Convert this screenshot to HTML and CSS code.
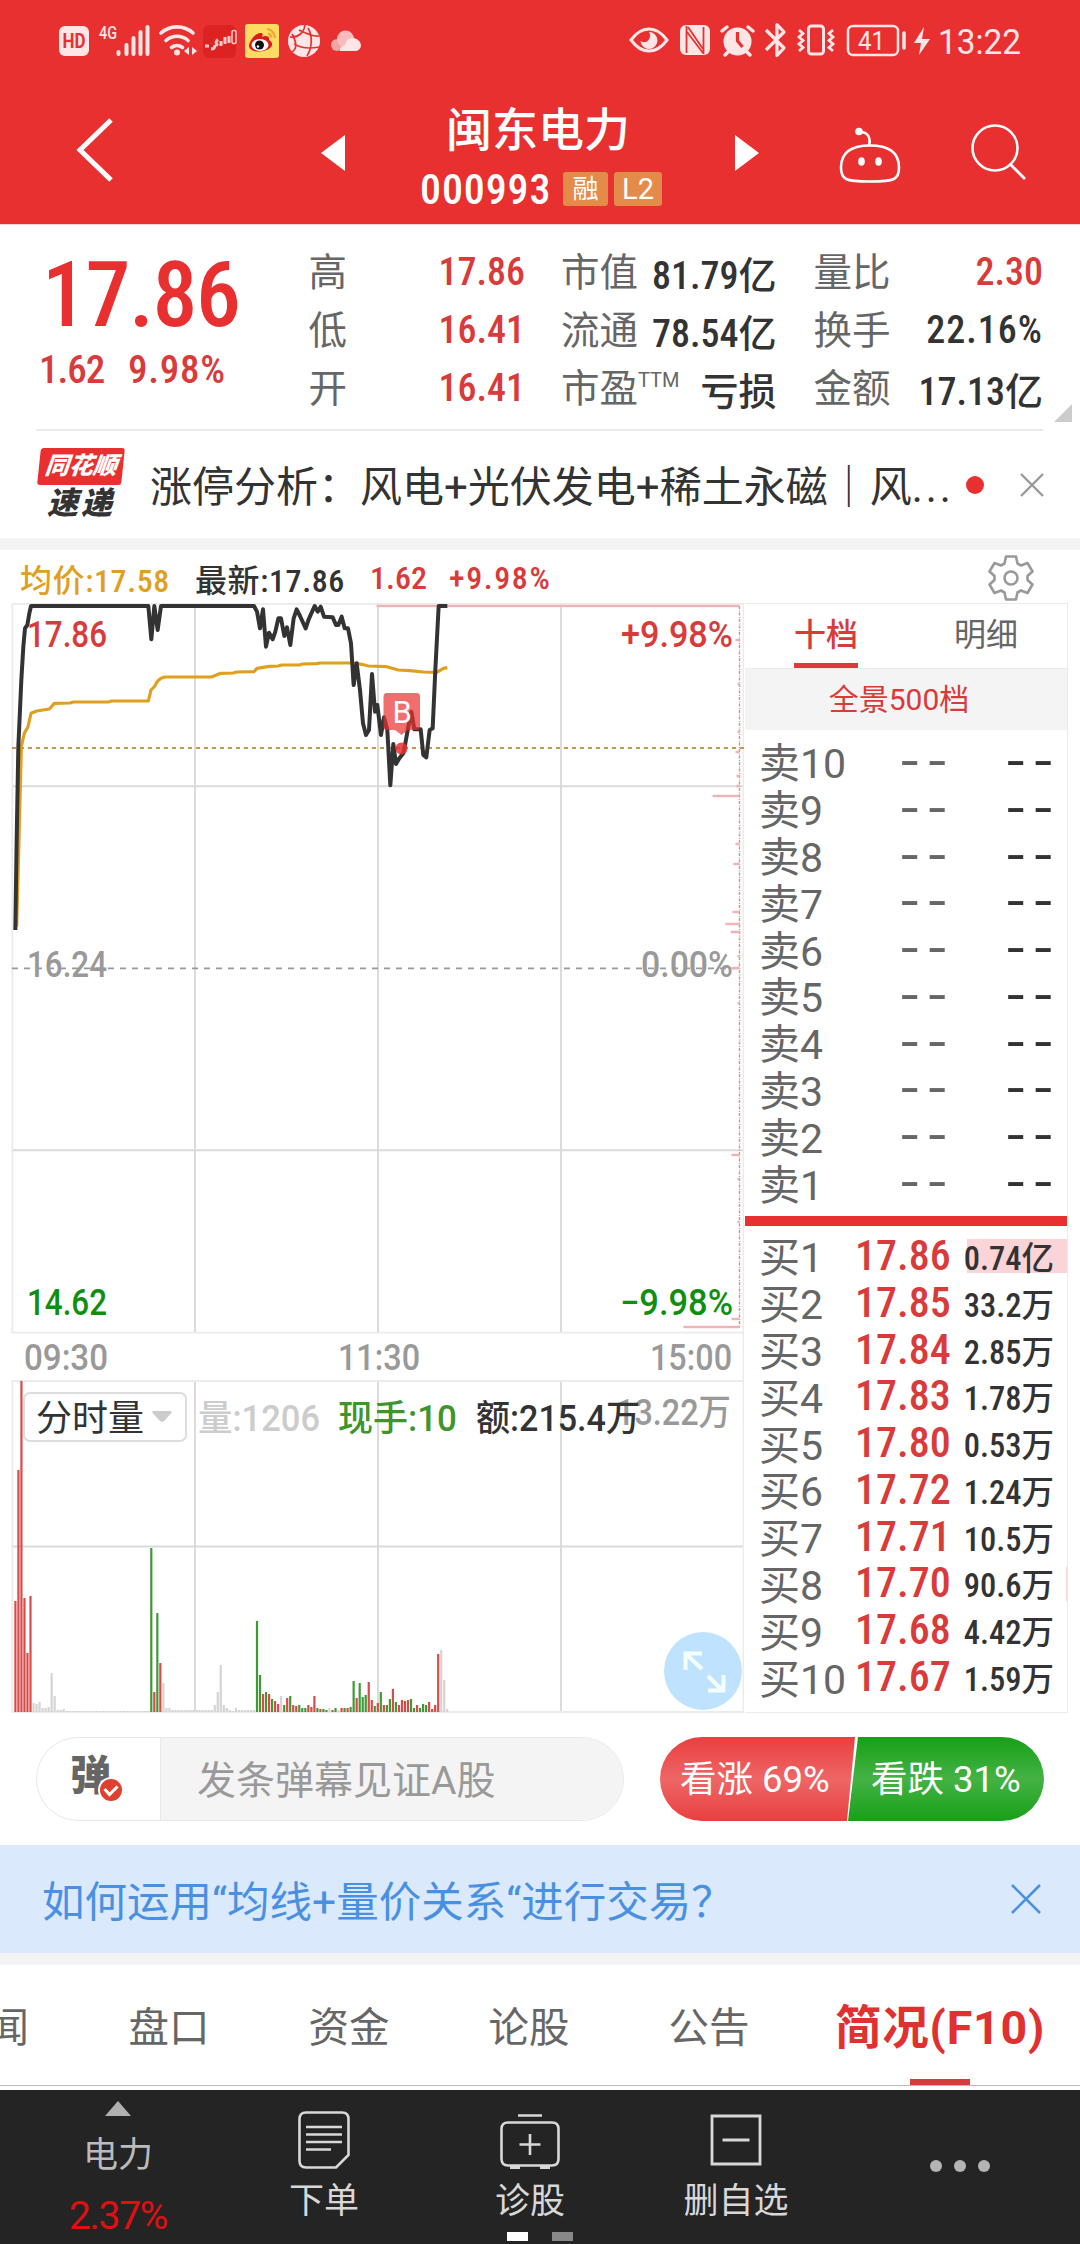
FILE: index.html
```html
<!DOCTYPE html>
<html lang="zh-CN">
<head>
    <meta charset="UTF-8">
    <title>闽东电力 000993</title>
    <link rel="stylesheet" href="styles.css">
</head>
<body>
    <header class="header">
        <div class="status-bar">
            <svg class="status-left" viewBox="59 20 304 40" width="304" height="40">
                <rect x="59" y="26" width="30" height="30" rx="6" fill="#ffe6e6"/>
                <text x="62.5" y="48" font-size="20" font-weight="700" fill="#e93030" textLength="23" lengthAdjust="spacingAndGlyphs">HD</text>
                <text x="99" y="39" font-size="19" font-weight="500" fill="#ffe6e6" textLength="18" lengthAdjust="spacingAndGlyphs">4G</text>
                <path d="M118.500 52v2M126.500 45v9M133.500 38v16M140.500 32v22M147.500 27v27" stroke="#ffe6e6" stroke-width="4" stroke-linecap="round"/>
                <g fill="none" stroke="#ffe6e6" stroke-width="3.600" stroke-linecap="round">
                    <path d="M161 33a24 24 0 0 1 32 0M166 40.500a16.500 16.500 0 0 1 22 0M171.500 47.500a9 9 0 0 1 11 0"/>
                </g>
                <circle cx="177" cy="52.500" r="3" fill="#ffe6e6"/>
                <path d="M189 47v8l-5-4zM192 47v8l5-4z" fill="#ffe6e6"/>
                <rect x="203" y="25" width="33" height="33" rx="6" fill="#dd2222"/>
                <path d="M205 46h4M211 49q4 0 4-4M218 39.500q-4 3 0 6M221 41v5M225 37v7M229 36v7" fill="none" stroke="#ffc9c9" stroke-width="3"/>
                <rect x="232" y="30.500" width="4" height="13" rx="1.500" fill="none" stroke="#ffc9c9" stroke-width="1.500"/>
                <rect x="245" y="24" width="34" height="34" rx="3" fill="#fedb62"/>
                <path d="M249 46c0-6 8-14 12-13 2 0 2 2 1 4 4-2 8-1 7 3 4 2 4 6 1 8-5 5-21 5-21-2z" fill="#dc1c1c"/>
                <ellipse cx="260" cy="45" rx="8.500" ry="6" fill="#fff"/>
                <circle cx="259.500" cy="45" r="4.500" fill="#111"/>
                <circle cx="258" cy="46.500" r="1.200" fill="#fff"/>
                <path d="M267 29a9 9 0 0 1 8 9M268 33.500a5 5 0 0 1 3.500 4" fill="none" stroke="#eda62c" stroke-width="2"/>
                <circle cx="304" cy="41" r="16" fill="#ffe6e6"/>
                <path d="M290 37c9 1 14-5 15-12M292 34c5 9 5 15 0 18M308 28c5 8 4 20-1 28M294 44q10 6 25 3M299 30c8 4 15 7 20 6" fill="none" stroke="#e93030" stroke-width="1.700"/>
                <circle cx="337" cy="45" r="6" fill="#f5a3a3"/>
                <circle cx="345.500" cy="39" r="8.500" fill="#f9bcbc"/>
                <path d="M340 51q-1-4 5-6 2-8 9-7 7 2 7 8-1 5-6 5z" fill="#ffe6e6"/>
            </svg>
            <svg class="status-right" viewBox="628 20 400 40" width="400" height="40">
                <path d="M631 40q8-11 18-11t18 11q-8 11-18 11t-18-11z" fill="none" stroke="#ffe6e6" stroke-width="3"/>
                <path d="M649 32a8.500 8.500 0 1 1-8.500 9q5 3 8-1t.5-8z" fill="#ffe6e6"/>
                <rect x="680" y="25" width="30" height="30" rx="6" fill="#ffe6e6"/>
                <path d="M686.500 26v27M703.500 54V27M688 27l15 22M687 32l16 21" stroke="#e93030" stroke-width="1.800"/>
                <circle cx="737.500" cy="41.500" r="14" fill="#ffe6e6"/>
                <path d="M722 31l5-4M753 31l-5-4M729 51l-4 4M746 51l4 4" stroke="#ffe6e6" stroke-width="3.500" stroke-linecap="round"/>
                <path d="M737.500 32v9l5 6" fill="none" stroke="#e93030" stroke-width="3.200"/>
                <path d="M766 30l18 18-7 7.500V24.500l7 7.500-18 18" fill="none" stroke="#ffe6e6" stroke-width="3.200" stroke-linejoin="round"/>
                <rect x="808.500" y="26" width="15" height="28" rx="3" fill="none" stroke="#ffe6e6" stroke-width="3"/>
                <path d="M799 30l4 3.500-4 3.500 4 3.500-4 3.500 4 3.500-4 3.500M833 30l-4 3.500 4 3.500-4 3.500 4 3.500-4 3.500 4 3.500" fill="none" stroke="#ffe6e6" stroke-width="2.800"/>
                <rect x="848" y="26" width="50" height="29" rx="5" fill="none" stroke="#ffe6e6" stroke-width="2.500"/>
                <path d="M904 33v15" stroke="#ffe6e6" stroke-width="3.500" stroke-linecap="round"/>
                <text x="858" y="49.500" font-size="26" fill="#ffe6e6" textLength="27" lengthAdjust="spacingAndGlyphs">41</text>
                <path d="M924 27l-10 16h7l-2 12 11-16h-8z" fill="#ffe6e6"/>
                <text x="938" y="54" font-size="35" fill="#ffe6e6" textLength="83" lengthAdjust="spacingAndGlyphs">13:22</text>
            </svg>
        </div>
        <div class="nav-bar">
            <svg class="nav-back" viewBox="0 0 38 66" width="38" height="66"><path d="M35 3L4 33l31 30" fill="none" stroke="#fff" stroke-width="5"/></svg>
            <svg class="nav-prev" viewBox="0 0 24 36" width="24" height="36"><path d="M24 0v36L0 18z" fill="#fff"/></svg>
            <div class="nav-title">
                <h1 class="stock-name">闽东电力</h1>
                <div class="stock-code">
                    <span class="num code">000993</span>
                    <span class="tag">融</span>
                    <span class="tag tag-l2">L2</span>
                </div>
            </div>
            <svg class="nav-next" viewBox="0 0 24 36" width="24" height="36"><path d="M0 0v36l24-18z" fill="#fff"/></svg>
            <svg class="nav-robot" viewBox="0 0 62 58" width="62" height="58">
                <path d="M31 19.500c18 0 29 6 29 22 0 12-4 14-29 14s-29-2-29-14c0-16 11-22 29-22z" fill="none" stroke="#fff" stroke-width="2.600"/>
                <path d="M30 19c2-7-1-13-9-13" fill="none" stroke="#fff" stroke-width="2.600"/>
                <circle cx="20" cy="5.500" r="3.800" fill="#fff"/>
                <ellipse cx="22.500" cy="35.500" rx="3.300" ry="4.300" fill="#fff"/>
                <ellipse cx="39.500" cy="35.500" rx="3.300" ry="4.300" fill="#fff"/>
            </svg>
            <svg class="nav-search" viewBox="0 0 56 56" width="56" height="56">
                <circle cx="25" cy="24" r="22.500" fill="none" stroke="#fff" stroke-width="2.600"/>
                <path d="M40 40l15 15" stroke="#fff" stroke-width="2.800"/>
            </svg>
        </div>
    </header>

    <section class="quote">
        <div class="quote-main">
            <div class="num quote-price">17.86</div>
            <div class="quote-change"><span class="num change">1.62</span><span class="num change-rate">9.98%</span></div>
        </div>
        <dl class="stats stats-a">
            <div><dt>高</dt><dd class="num red">17.86</dd></div>
            <div><dt>低</dt><dd class="num red">16.41</dd></div>
            <div><dt>开</dt><dd class="num red">16.41</dd></div>
        </dl>
        <dl class="stats stats-b">
            <div><dt>市值</dt><dd class="num">81.79亿</dd></div>
            <div><dt>流通</dt><dd class="num">78.54亿</dd></div>
            <div><dt>市盈<sup>TTM</sup></dt><dd class="num">亏损</dd></div>
        </dl>
        <dl class="stats stats-c">
            <div><dt>量比</dt><dd class="num red">2.30</dd></div>
            <div><dt>换手</dt><dd class="num turnover">22.16%</dd></div>
            <div><dt>金额</dt><dd class="num">17.13亿</dd></div>
        </dl>
        <i class="quote-more"></i>
    </section>

    <section class="news">
        <div class="news-logo">
            <span class="news-logo-top">同花顺</span>
            <span class="news-logo-bottom">速递</span>
        </div>
        <p class="news-text">涨停分析：风电+光伏发电+稀土永磁｜风<span class="dots">...</span></p>
        <i class="news-dot"></i>
        <svg viewBox="0 0 24 24" width="24" height="24"><path d="M1 1l22 22M23 1L1 23" stroke="#999" stroke-width="2.400"/></svg>
    </section>

    <section class="chart-panel">
        <div class="chart-info">
            <span class="num avg">均价:17.58</span>
            <span class="num latest">最新:17.86</span>
            <span class="num diff">1.62</span>
            <span class="num rate">+9.98%</span>
            <svg class="gear" viewBox="-24 -24 48 48" width="48" height="48">
                <path d="M-5-21.500H5L6.500-14.500 10-12.500 16.500-15 21.500-6.500 16.500-2V2l5 4.500L16.500 15 10 12.500 6.500 14.500 5 21.500H-5L-6.500 14.500-10 12.500-16.500 15-21.500 6.500-16.500 2V-2l-5-4.500L-16.500-15-10-12.500-6.500-14.500z" fill="none" stroke="#999" stroke-width="2.600" stroke-linejoin="round"/>
                <circle r="6.500" fill="none" stroke="#999" stroke-width="2.600"/>
            </svg>
        </div>
        <div class="chart-body">
            <svg class="chart" viewBox="0 603 744 1110" width="744" height="1110">
                <!-- 网格 -->
                <g fill="none" stroke="#dadada" stroke-width="1.900">
                    <path d="M12 786.300H744M12 1150.300H744M195 604V1333M378 604V1333M561 604V1333"/>
                    <path d="M12 1546.500H744M195 1381V1712M378 1381V1712M561 1381V1712"/>
                </g>
                <g fill="none" stroke="#ebebeb" stroke-width="1.800">
                    <path d="M12.300 603.900H743.500V1712H12.300V1381H743.500M12.300 604V1332.700H743.500"/>
                </g>
                <path d="M12 968.300H739" stroke="#999" stroke-width="1.800" stroke-dasharray="6 6"/>
                <path d="M12 748H744" stroke="#c89550" stroke-width="2.200" stroke-dasharray="4 4"/>
                <!-- 筹码分布 -->
                <path d="M739.500 606V1328" stroke="#d68e94" stroke-width="1.400" stroke-dasharray="3 1.500 1 1"/>
                <g id="chips"></g>
                <!-- 均价线 / 分时线 -->
                <g transform="translate(0 540) scale(.33333)" fill="none" stroke-linejoin="round">
                    <polyline stroke="#dfa01f" stroke-width="9.500" points="50,1160 57,900 64,620 73,580 84,560 93,520 110,513 148,507 163,490 210,489 220,486 325,486 335,483 445,483 453,450 463,440 473,423 483,415 495,411 635,411 662,400 700,399 710,396 762,395 771,385 808,379 835,378 845,375 898,375 908,372 950,371 960,369 1060,369 1085,373 1105,378 1160,380 1195,390 1230,392 1270,396 1310,397 1330,385 1342,383"/>
                    <polyline stroke="#333" stroke-width="12" points="46,1170 50,900 55,620 64,420 70,320 75,265 82,255 88,220 93,198 445,198 454,298 463,198 473,270 483,198 762,198 771,215 780,265 789,208 798,320 807,278 818,298 826,275 835,235 843,235 853,288 861,262 871,315 881,235 890,208 900,228 917,265 926,238 944,198 953,215 962,200 972,230 998,232 1008,255 1015,255 1025,230 1034,265 1044,265 1053,310 1061,435 1070,370 1080,450 1089,550 1098,585 1107,570 1116,402 1125,515 1132,495 1143,585 1152,532 1162,570 1171,736 1180,612 1188,672 1198,655 1210,640 1216,610 1225,560 1234,515 1243,568 1262,568 1270,645 1279,652 1289,570 1298,565 1306,390 1316,198 1342,198"/>
                </g>
                <!-- 买入标记 -->
                <path d="M387 693h29.500q3.500 0 3.500 3.500v30q0 3.500-3.500 3.500H408l-6.500 5-6.500-5h-8q-3.500 0-3.500-3.500v-30q0-3.500 3.500-3.500z" fill="#e93030" fill-opacity=".7"/>
                <text x="392.500" y="722.500" font-size="31" fill="#fff">B</text>
                <circle cx="401.500" cy="748.500" r="6" fill="#e93030" fill-opacity=".85"/>
                <g class="axis">
                    <text x="27" y="647" class="up" textLength="80" lengthAdjust="spacingAndGlyphs">17.86</text>
                    <text x="621" y="647" class="up" textLength="112" lengthAdjust="spacingAndGlyphs">+9.98%</text>
                    <text x="27" y="977" class="flat" textLength="80" lengthAdjust="spacingAndGlyphs">16.24</text>
                    <text x="641" y="977" class="flat" textLength="92" lengthAdjust="spacingAndGlyphs">0.00%</text>
                    <text x="27" y="1315" class="down" textLength="80" lengthAdjust="spacingAndGlyphs">14.62</text>
                    <text x="620" y="1315" class="down" textLength="113" lengthAdjust="spacingAndGlyphs">−9.98%</text>
                    <text x="24" y="1370" class="flat" textLength="84" lengthAdjust="spacingAndGlyphs">09:30</text>
                    <text x="338" y="1370" class="flat" textLength="82" lengthAdjust="spacingAndGlyphs">11:30</text>
                    <text x="650" y="1370" class="flat" textLength="82" lengthAdjust="spacingAndGlyphs">15:00</text>
                </g>
                <!-- 成交量 -->
                <g id="volume"></g>
                <rect x="24" y="1393" width="162" height="48" rx="6" fill="#fff" stroke="#ddd" stroke-width="2"/>
                <text x="36" y="1431" font-size="36" fill="#333">分时量</text>
                <path d="M154 1411h16q3 0 1 2.500l-7 7.500q-2 1.500-4 0l-7-7.500q-2-2.500 1-2.500z" fill="#ccc"/>
                <g class="axis">
                    <text x="616" y="1425" class="flat" textLength="115" lengthAdjust="spacingAndGlyphs">13.22万</text>
                    <text x="198" y="1431" fill="#ccc" textLength="122" lengthAdjust="spacingAndGlyphs">量:1206</text>
                    <text x="338" y="1431" fill="#3d952b" textLength="119" lengthAdjust="spacingAndGlyphs">现手:10</text>
                    <text x="476" y="1431" fill="#333" textLength="164" lengthAdjust="spacingAndGlyphs">额:215.4万</text>
                </g>
                <circle cx="703" cy="1671" r="39" fill="#bfe3ff"/>
                <path d="M702 1669l-16-15M685.500 1670v-16.500H702M708 1676l14 14M708 1690.500h15.500V1675" fill="none" stroke="#f4fffc" stroke-width="4"/>
            </svg>
            <div class="book">
                <div class="book-tabs">
                    <span class="active">十档</span>
                    <span>明细</span>
                </div>
                <div class="book-all">全景500档</div>
                <div class="book-list sell" id="sellList"></div>
                <div class="book-split"></div>
                <div class="book-list buy" id="buyList"></div>
            </div>
        </div>
    </section>

    <section class="danmu">
        <div class="danmu-input">
            <div class="danmu-switch">弹
                <svg class="danmu-check" viewBox="0 0 26 26" width="26" height="26">
                    <circle cx="13" cy="13" r="12" fill="#e0402e" stroke="#fff" stroke-width="2"/>
                    <path d="M6.500 12l5 5.500 8-8" fill="none" stroke="#fff" stroke-width="3"/>
                </svg>
            </div>
            <div class="danmu-text">发条弹幕见证A股</div>
        </div>
        <div class="vote">
            <div class="vote-up">看涨 69%</div>
            <div class="vote-down">看跌 31%</div>
        </div>
    </section>

    <section class="tip">
        <span>如何运用“均线+量价关系“进行交易？</span>
        <svg viewBox="0 0 30 30" width="30" height="30"><path d="M1 1l28 28M29 1L1 29" stroke="#4a90e2" stroke-width="2.600"/></svg>
    </section>

    <nav class="tabs">
        <span>新闻</span>
        <span>盘口</span>
        <span>资金</span>
        <span>论股</span>
        <span>公告</span>
        <span class="active">简况(F10)</span>
    </nav>

    <footer class="bottom">
        <div class="bottom-item sector">
            <svg viewBox="0 0 26 15" width="26" height="15"><path d="M13 0l13 15H0z" fill="#b0b0b0"/></svg>
            <span>电力</span>
            <b>2.37%</b>
        </div>
        <div class="bottom-item">
            <svg viewBox="0 0 52 58" width="52" height="58" fill="none" stroke="#d8d8d8" stroke-width="2.600">
                <path d="M8 1.500h36q6.500 0 6.500 6.500v36L38 56.500H8Q1.500 56.500 1.500 50V8Q1.500 1.500 8 1.500z"/>
                <path d="M8 16h36M8 23.500h36M8 31h36M8 38.500h25"/>
            </svg>
            <span>下单</span>
        </div>
        <div class="bottom-item">
            <svg viewBox="0 0 60 58" width="60" height="58" fill="none" stroke="#d8d8d8" stroke-width="2.600">
                <path d="M8 11.500h44q6.500 0 6.500 6.500v30q0 6.500-6.500 6.500H8Q1.500 54.500 1.500 48V18q0-6.500 6.500-6.500zM18 4.500h24M30 23v21M19.500 33.500h21"/>
                <path d="M10 56h10M40 56h10" stroke-width="4"/>
            </svg>
            <span>诊股</span>
        </div>
        <div class="bottom-item">
            <svg viewBox="0 0 52 58" width="52" height="58" fill="none" stroke="#d8d8d8" stroke-width="2.800">
                <path d="M2 5h48v48H2zM12.500 29h27"/>
            </svg>
            <span>删自选</span>
        </div>
        <div class="bottom-item more">
            <i></i><i></i><i></i>
        </div>
        <div class="pager"><i class="on"></i><i></i></div>
    </footer>

    <script>
        const SVG_NS = 'http://www.w3.org/2000/svg';

        function addRect(parent, x, y, width, height, fill) {
            const rect = document.createElementNS(SVG_NS, 'rect');
            rect.setAttribute('x', x);
            rect.setAttribute('y', y);
            rect.setAttribute('width', width);
            rect.setAttribute('height', height);
            rect.setAttribute('fill', fill);
            parent.appendChild(rect);
        }

        // 每分钟成交量：高度 + 颜色 (r 涨 / g 跌 / n 平)
        const volumes = ('111r 242r 331r 114r 59r 116r 9n 8n 10n 4n 4n 5n 39n 16n 2n 2n 3n ' + '1n '.repeat(28) +
            '164g 20r 99g 49r 29n 4n 4n ' + '2n '.repeat(14) + '7n 20n 47n 7n 4n 2n 1n 4n ' + '2n '.repeat(6) +
            '91g 37g 18r 20g 18r 13g 11r 8r 16n 7g 14r 16g 7r 6r 7g 4g 4g 7r 5r 16r 4g 3r 3g 2g 4n 2r 4g 2n 4r 4g 4r 5g ' +
            '31g 14r 29g 15g 17g 30r 12r 6g 9r 20g 7r 7g 13g 23r 10g 7r 12r 11r 12r 13g 4g 7r 4g 8g 7g 10r 3r 7r 58r 62n 32n 3n').split(/\s+/);
        const volumeColors = { r: '#d94a4a', g: '#3f9a36', n: '#d4d4d4' };
        const volume = document.getElementById('volume');
        volumes.forEach((item, i) => {
            const h = parseInt(item);
            addRect(volume, 14.3 + i * 3.02, 1712 - h, 2.2, h, volumeColors[item.slice(-1)]);
        });

        // [y, 长度]
        const chips = document.getElementById('chips');
        [[606, 363], [640, 4], [684, 2], [732, 2], [752, 4], [776, 3], [786, 3], [796, 27], [844, 4], [864, 6], [912, 7],
         [924, 14], [932, 9], [956, 2], [968, 8], [1003, 2], [1155, 8], [1179, 2], [1222, 2], [1319, 8], [1327, 56]]
            .forEach(([y, w]) => addRect(chips, 739.5 - w, y - 1.2, w, 2.4, '#f0b2b5'));

        function addRow(list, name, price, amount, percent) {
            const row = document.createElement('div');
            row.className = 'book-row';
            row.innerHTML = `<span class="name">${name}</span><span class="price num">${price}</span><span class="amount num">${amount}</span>`;
            if (percent) {
                const bar = document.createElement('i');
                bar.className = 'book-bar';
                bar.style.width = percent + '%';
                row.prepend(bar);
            }
            list.appendChild(row);
        }

        const sellList = document.getElementById('sellList');
        for (let i = 10; i > 0; i--) {
            addRow(sellList, '卖' + i, '--', '--');
        }

        const buyList = document.getElementById('buyList');
        [['17.86', '0.74亿', 31], ['17.85', '33.2万'], ['17.84', '2.85万'], ['17.83', '1.78万'], ['17.80', '0.53万'],
         ['17.72', '1.24万'], ['17.71', '10.5万'], ['17.70', '90.6万', 0.4], ['17.68', '4.42万'], ['17.67', '1.59万']]
            .forEach(([price, amount, percent], i) => addRow(buyList, '买' + (i + 1), price, amount, percent));
    </script>
</body>
</html>
```
FILE: styles.css
```css
* {
    box-sizing: border-box;
    margin: 0;
    padding: 0;
}
body {
    width: 1080px;
    height: 2244px;
    overflow: hidden;
    font-family: Roboto, 'Noto Sans CJK SC', sans-serif;
    background: #fff;
    color: #333;
}
svg {
    display: block;
    flex: none;
}
i {
    font-style: normal;
}
.num {
    font-weight: 500;
    font-stretch: 85%;
}
.red {
    color: #d93a3a;
}

/* 顶部 */
.header {
    height: 225px;
    background: #e93030;
    border-bottom: 1px solid #fbd5d5;
}
.status-bar {
    display: flex;
    justify-content: space-between;
    padding: 20px 52px 0 59px;
    height: 80px;
}
.nav-bar {
    display: flex;
    align-items: flex-start;
    padding-left: 76px;
}
.nav-back { margin-top: 37px; }
.nav-prev { margin: 55px 0 0 207px; }
.nav-next { margin: 55px 0 0 73px; }
.nav-robot { margin: 46px 0 0 80px; }
.nav-search { margin: 44px 0 0 69px; }
.nav-title {
    width: 242px;
    margin-left: 75px;
}
.stock-name {
    margin: 17px 0 0 26px;
    font-size: 46px;
    line-height: 66px;
    font-weight: 500;
    color: #fff;
    white-space: nowrap;
}
.stock-code {
    display: flex;
    align-items: center;
    height: 52px;
    color: #fff;
}
.code {
    width: 143px;
    font-size: 42px;
    letter-spacing: .9px;
}
.tag {
    width: 45px;
    height: 34px;
    margin-right: 6px;
    border-radius: 3px;
    background: #e58b49;
    font-size: 26px;
    line-height: 34px;
    text-align: center;
}
.tag-l2 {
    width: 48px;
    margin-right: 0;
    font-size: 29px;
}

/* 行情 */
.quote {
    display: flex;
    position: relative;
    height: 206px;
    margin: 0 37px 0 36px;
    border-bottom: 2px solid #ebebeb;
}
.quote-main {
    width: 273px;
    color: #e93030;
}
.quote-price {
    margin: 26px 0 0 6px;
    font-size: 90px;
    line-height: 90px;
    letter-spacing: -1.500px;
}
.quote-change {
    display: flex;
    margin: 6px 0 0 3px;
    font-size: 39px;
    line-height: 46px;
    color: #d93a3a;
}
.change {
    width: 89px;
    letter-spacing: -1px;
}
.change-rate { letter-spacing: .7px; }
.stats {
    padding-top: 18px;
}
.stats div {
    display: flex;
    justify-content: space-between;
    align-items: center;
    height: 58px;
    font-size: 38px;
    white-space: nowrap;
}
.stats dt {
    padding-bottom: 6px;
    font-size: 38.500px;
    color: #666;
}
.stats sup {
    font-size: 20px;
    line-height: 0;
    vertical-align: 15px;
}
.stats .turnover { letter-spacing: 1px; }
.stats-a { width: 217px; }
.stats-b { width: 216px; margin-left: 36px; }
.stats-c { width: 230px; margin-left: 37px; }
.quote-more {
    position: absolute;
    right: -29px;
    bottom: 7px;
    border: 9px solid #ccc;
    border-top-color: transparent;
    border-left-color: transparent;
}

/* 快讯 */
.news {
    display: flex;
    align-items: center;
    height: 107px;
    padding: 0 36px 0 37px;
}
.news-logo {
    width: 88px;
    margin-right: 25px;
    text-align: center;
    font-weight: 900;
    font-style: italic;
}
.news-logo-top {
    display: block;
    height: 37px;
    margin: 0 2px;
    border-radius: 3px;
    transform: skewX(-6deg);
    background: #e93030;
    color: #fff;
    font-size: 24px;
    line-height: 36px;
}
.news-logo-bottom {
    display: block;
    font-size: 31px;
    line-height: 37px;
    letter-spacing: 3px;
}
.news-text {
    width: 815px;
    padding-bottom: 3px;
    font-size: 42px;
    white-space: nowrap;
}
.dots { letter-spacing: 3px; }
.news-dot {
    width: 18px;
    height: 18px;
    border-radius: 50%;
    background: #e93030;
    margin: 0 auto 0 1px;
}

/* 分时图 */
.chart-panel {
    border-top: 12px solid #f4f4f4;
}
.chart-info {
    display: flex;
    align-items: center;
    height: 53px;
    padding: 2px 0 0 20px;
    font-size: 32px;
    letter-spacing: .6px;
    white-space: nowrap;
}
.avg { width: 175px; color: #dfa01f; }
.latest { width: 175px; }
.diff { width: 79px; color: #d93a3a; letter-spacing: 0; }
.rate { color: #d93a3a; letter-spacing: 1.600px; }
.gear { margin: 1px 45px 0 auto; }
.chart-body {
    display: flex;
    height: 1110px;
}
.axis {
    font-size: 36px;
    font-weight: 500;
}
.up { fill: #d93a3a; }
.down { fill: #0f8f0f; }
.flat { fill: #999; }

/* 盘口 */
.book {
    width: 323px;
    height: 1110px;
    margin-left: 1px;
    border: 1px solid #ebebeb;
    border-left: 0;
}
.book-tabs {
    display: flex;
    justify-content: space-between;
    height: 65px;
    padding: 0 49px 0 49px;
    font-size: 32px;
    line-height: 62px;
    color: #666;
    border-bottom: 1px solid #ebebeb;
}
.book-tabs .active {
    height: 64px;
    color: #d93a3a;
    border-bottom: 5px solid #d93a3a;
    font-weight: 500;
}
.book-all {
    height: 61px;
    background: #f4f4f4;
    color: #d93a3a;
    font-size: 30px;
    line-height: 62px;
    text-align: center;
    padding-right: 14px;
}
.book-row {
    display: flex;
    position: relative;
    align-items: center;
    height: 46.800px;
    padding: 0 13px 0 14px;
    white-space: nowrap;
}
.book-row span { position: relative; }
.name {
    width: 96px;
    padding-bottom: 2px;
    font-size: 41px;
    color: #666;
}
.price {
    width: 93px;
    font-size: 42px;
    color: #d93a3a;
}
.amount {
    flex: 1;
    font-size: 32.500px;
    text-align: right;
}
.sell { padding-top: 8px; height: 486px; }
.sell .price,
.sell .amount {
    left: 6px;
    font-size: 40px;
    letter-spacing: 3.700px;
    color: #666;
    transform: scaleX(1.7);
    transform-origin: right;
    text-align: right;
}
.sell .amount { color: #333; }
.book-split {
    height: 10px;
    background: #e93030;
}
.buy { padding-top: 6px; }
.book-bar {
    position: absolute;
    right: 0;
    top: 7px;
    height: 34px;
    background: #fad4d6;
}

/* 弹幕 */
.danmu {
    display: flex;
    align-items: center;
    justify-content: space-between;
    height: 132px;
    padding: 0 36px;
}
.danmu-input {
    display: flex;
    width: 588px;
    height: 84px;
    border: 1px solid #e8e8e8;
    border-radius: 42px;
    overflow: hidden;
    line-height: 82px;
}
.danmu-switch {
    position: relative;
    width: 124px;
    padding-left: 33px;
    font-size: 41px;
    line-height: 76px;
    font-weight: 900;
    color: #666;
    border-right: 1px solid #e8e8e8;
}
.danmu-check {
    position: absolute;
    left: 61px;
    top: 39px;
}
.danmu-text {
    flex: 1;
    padding: 2px 0 0 36px;
    background: #f4f4f4;
    color: #999;
    font-size: 39px;
}
.vote {
    display: flex;
    width: 384px;
    height: 84px;
    border-radius: 42px;
    overflow: hidden;
    color: #fff;
    font-size: 36.500px;
    line-height: 86px;
    white-space: nowrap;
}
.vote-up {
    width: 196px;
    padding-left: 20px;
    background: linear-gradient(#e93f3f, #ee6666, #e93f3f);
    clip-path: polygon(0 0, 100% 0, 187px 100%, 0 100%);
}
.vote-down {
    width: 197px;
    margin-left: -7px;
    padding-left: 23px;
    background: linear-gradient(#18a018, #44b244, #18a018);
    clip-path: polygon(10px 0, 100% 0, 100% 100%, 0 100%);
}

.tip {
    display: flex;
    align-items: center;
    justify-content: space-between;
    height: 108px;
    padding: 0 39px 0 42px;
    background: #dae9fb;
    color: #4a90e2;
    font-size: 42.500px;
}
.tip span { padding-bottom: 2px; }

/* 底部标签 */
.tabs {
    display: flex;
    height: 133px;
    border-top: 12px solid #f4f4f4;
    border-bottom: 1px solid #bbb;
    font-size: 40.500px;
    line-height: 126px;
    color: #666;
    white-space: nowrap;
}
.tabs span {
    width: 180px;
    flex: none;
    text-align: center;
}
.tabs span:first-child {
    width: 81px;
    margin-left: -52px;
    margin-right: 50px;
}
.tabs .active {
    position: relative;
    width: 220px;
    margin-left: 31px;
    color: #e03030;
    font-size: 46.500px;
    font-weight: 700;
    letter-spacing: .8px;
}
.tabs .active::after {
    content: '';
    position: absolute;
    left: 80px;
    top: 114px;
    width: 60px;
    height: 6px;
    background: #d93a3a;
}

.bottom {
    display: grid;
    grid-template-columns: repeat(4, 206px) 241px;
    position: relative;
    height: 154px;
    margin-top: 4px;
    padding-left: 15px;
    background: #242424;
    color: #d8d8d8;
    font-size: 35px;
}
.bottom-item {
    display: flex;
    flex-direction: column;
    align-items: center;
    padding-top: 21px;
}
.bottom-item span {
    margin-top: 8px;
    line-height: 50px;
}
.sector { padding-top: 11px; }
.sector span {
    margin-top: 15px;
    color: #bbb;
}
.sector b {
    margin-top: 12px;
    font-size: 39px;
    line-height: 46px;
    font-weight: 400;
    letter-spacing: -1.300px;
    color: #e01010;
}
.more {
    flex-direction: row;
    justify-content: center;
    align-items: flex-start;
    gap: 12px;
    padding-top: 70px;
}
.more i {
    width: 12px;
    height: 12px;
    border-radius: 50%;
    background: #b4b4b4;
}
.pager {
    display: flex;
    gap: 24px;
    position: absolute;
    left: 507px;
    bottom: 3px;
}
.pager i {
    width: 21px;
    height: 9px;
    background: #888;
}
.pager .on { background: #fff; }
```
